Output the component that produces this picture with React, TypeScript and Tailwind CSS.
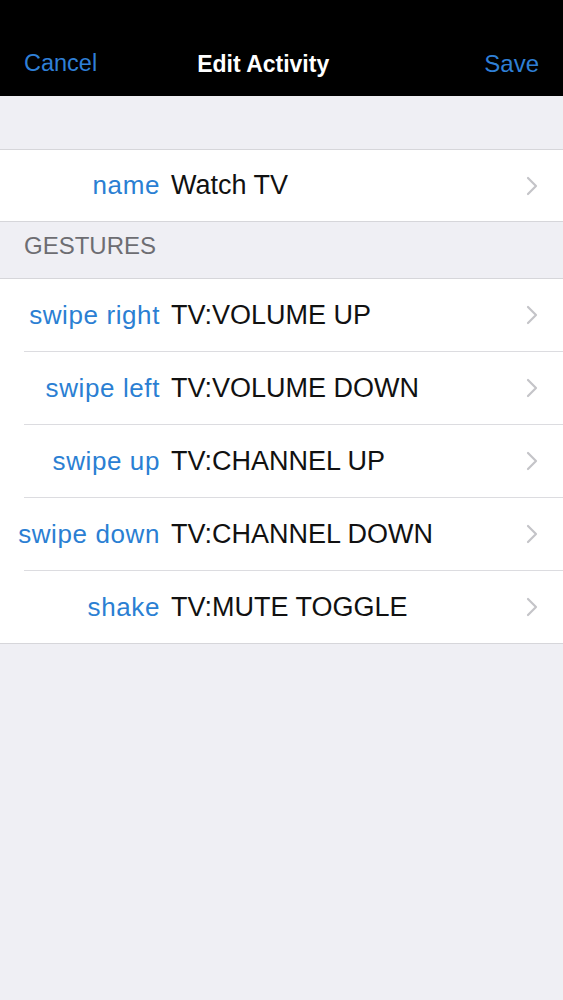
const font = { fontFamily: '"Liberation Sans", Arial, sans-serif' };

const gestures = [
  { label: "swipe right", value: "TV:VOLUME UP" },
  { label: "swipe left", value: "TV:VOLUME DOWN" },
  { label: "swipe up", value: "TV:CHANNEL UP" },
  { label: "swipe down", value: "TV:CHANNEL DOWN" },
  { label: "shake", value: "TV:MUTE TOGGLE" },
];

function Chevron() {
  return (
    <svg width="14" height="20" viewBox="0 0 14 20" className="shrink-0">
      <path
        d="M3 2 L11 10 L3 18"
        fill="none"
        stroke="#c4c4c8"
        strokeWidth="2.2"
        strokeLinecap="round"
        strokeLinejoin="round"
      />
    </svg>
  );
}

function Row({ label, value }: { label: string; value: string }) {
  return (
    <div className="flex h-[72px] items-center pr-[24px]">
      <span className="w-[160px] shrink-0 text-right text-[26px] tracking-[0.6px] text-[#2b7fd3]">
        {label}
      </span>
      <span className="ml-[11px] flex-1 text-[27px] text-[#111]">{value}</span>
      <Chevron />
    </div>
  );
}

export default function App() {
  return (
    <div className="flex min-h-[1000px] w-full flex-col bg-[#efeff4]" style={font}>
      {/* nav bar */}
      <div className="flex h-[96px] items-end bg-black px-[24px] pb-[20px]">
        <div className="flex h-[24px] w-full items-center">
          <span className="text-[23.5px] text-[#2f7fd6]">Cancel</span>
          <span className="ml-[100px] text-[23px] font-bold text-white">Edit Activity</span>
          <span className="flex-1" />
          <span className="text-[24px] text-[#2f7fd6]">Save</span>
        </div>
      </div>

      <div className="h-[53px]" />

      <div className="border-y border-[#d6d6da] bg-white">
        <div className="h-[71px] [&>div]:h-[71px]">
          <Row label="name" value="Watch TV" />
        </div>
      </div>

      <div className="flex h-[56px] items-start px-[24px] pt-[10px]">
        <span className="text-[24px] leading-[28px] text-[#6d6d72]">GESTURES</span>
      </div>

      <div className="border-y border-[#d6d6da] bg-white">
        {gestures.map((g, i) => (
          <div key={g.label} className="relative">
            <Row label={g.label} value={g.value} />
            {i < gestures.length - 1 && (
              <div className="ml-[24px] h-px bg-[#dcdce0]" />
            )}
          </div>
        ))}
      </div>
    </div>
  );
}
